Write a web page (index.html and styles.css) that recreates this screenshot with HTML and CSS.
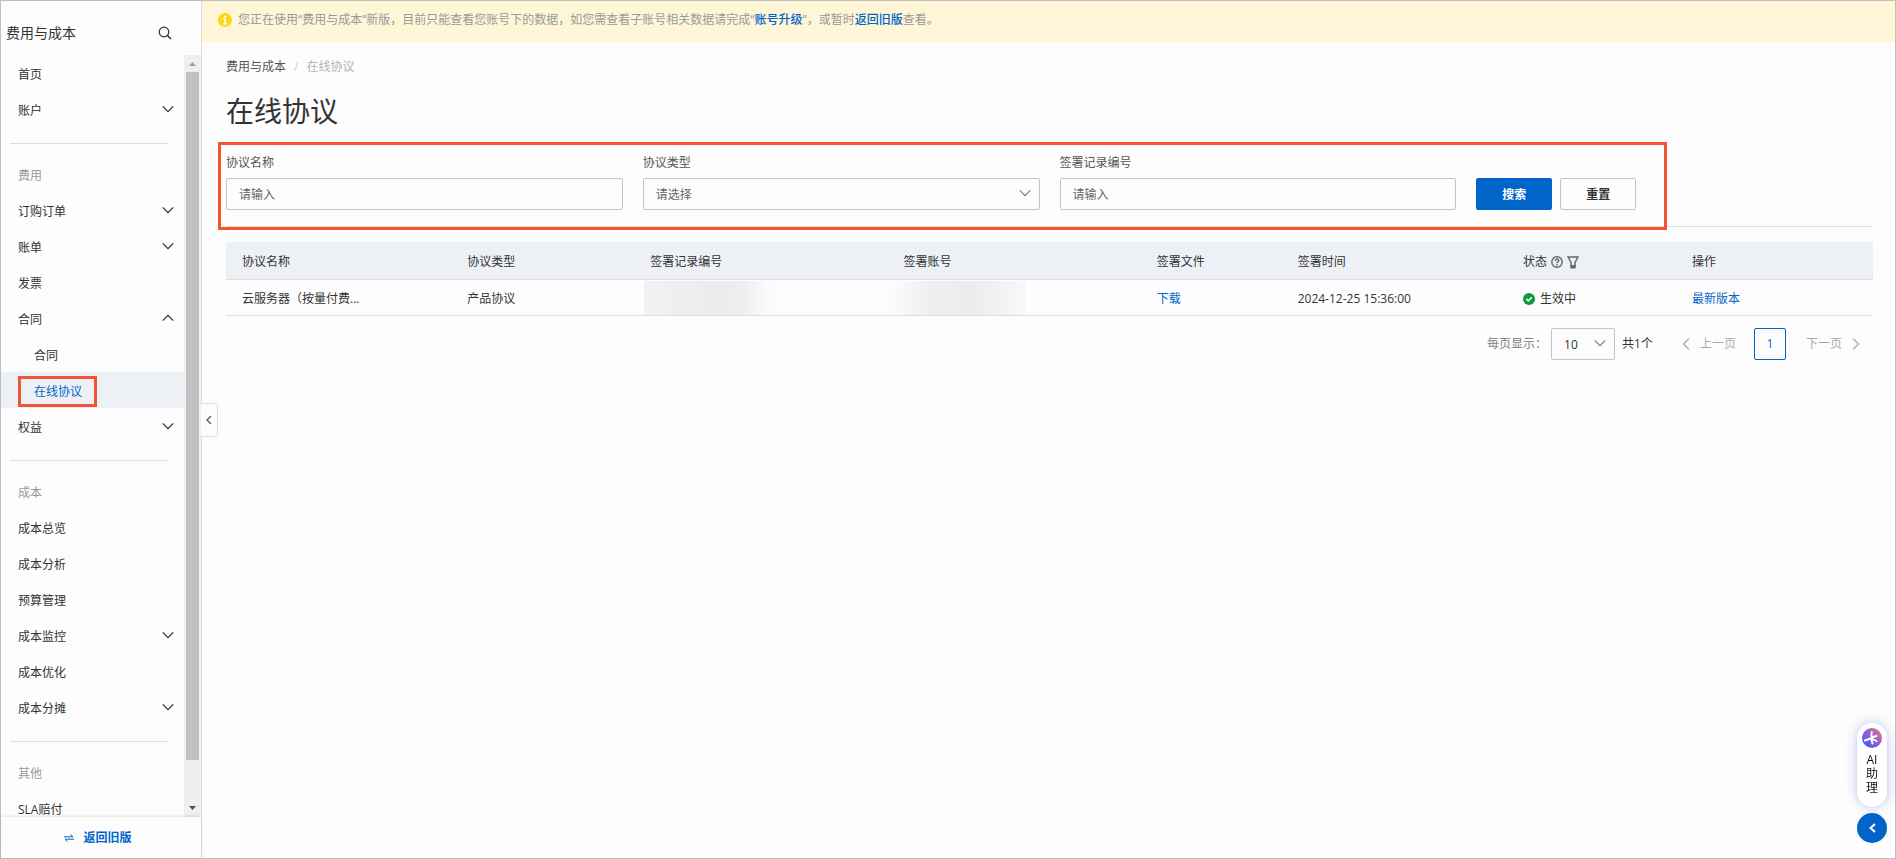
FILE: index.html
```html
<!DOCTYPE html>
<html lang="zh-CN">
<head>
<meta charset="utf-8">
<title>在线协议</title>
<link rel="stylesheet" href="styles.css">
</head>
<body>
<svg class="defs" aria-hidden="true">
  <symbol id="down" viewBox="0 0 12 12"><path d="M.8 3.400 6 8.600l5.200-5.200" fill="none" stroke="currentColor" stroke-width="1.300"/></symbol>
  <symbol id="up" viewBox="0 0 12 12"><path d="M.8 8.600 6 3.400l5.200 5.200" fill="none" stroke="currentColor" stroke-width="1.300"/></symbol>
  <symbol id="left" viewBox="0 0 12 12"><path d="M8.800.8 3.600 6l5.200 5.200" fill="none" stroke="currentColor" stroke-width="1.300"/></symbol>
  <symbol id="right" viewBox="0 0 12 12"><path d="M3.200.8 8.400 6l-5.200 5.200" fill="none" stroke="currentColor" stroke-width="1.300"/></symbol>
</svg>
<div class="app">
  <aside class="sidebar">
    <header class="side-head">
      <span>费用与成本</span>
      <button class="icon-btn" aria-label="搜索菜单"><svg width="14" height="14" viewBox="0 0 14 14"><circle cx="6" cy="6" r="4.800" fill="none" stroke="currentColor" stroke-width="1.200"/><path d="m9.500 9.500 3.500 3.500" stroke="currentColor" stroke-width="1.500"/></svg></button>
    </header>
    <div class="side-body">
      <nav class="menu">
        <a class="item" href="#"><span>首页</span></a>
        <button class="item"><span>账户</span><svg class="chev"><use href="#down"/></svg></button>
        <hr class="rule">
        <h2 class="item group"><span>费用</span></h2>
        <button class="item"><span>订购订单</span><svg class="chev"><use href="#down"/></svg></button>
        <button class="item"><span>账单</span><svg class="chev"><use href="#down"/></svg></button>
        <a class="item" href="#"><span>发票</span></a>
        <button class="item"><span>合同</span><svg class="chev"><use href="#up"/></svg></button>
        <a class="item sub" href="#"><span>合同</span></a>
        <a class="item sub active" href="#"><span>在线协议</span></a>
        <button class="item"><span>权益</span><svg class="chev"><use href="#down"/></svg></button>
        <hr class="rule">
        <h2 class="item group"><span>成本</span></h2>
        <a class="item" href="#"><span>成本总览</span></a>
        <a class="item" href="#"><span>成本分析</span></a>
        <a class="item" href="#"><span>预算管理</span></a>
        <button class="item"><span>成本监控</span><svg class="chev"><use href="#down"/></svg></button>
        <a class="item" href="#"><span>成本优化</span></a>
        <button class="item"><span>成本分摊</span><svg class="chev"><use href="#down"/></svg></button>
        <hr class="rule">
        <h2 class="item group"><span>其他</span></h2>
        <a class="item" href="#"><span>SLA赔付</span></a>
      </nav>
      <div class="scrollbar" aria-hidden="true">
        <svg class="arrow dim" viewBox="0 0 17 17"><path d="M5 11h7L8.500 7z" fill="currentColor"/></svg>
        <div class="track"><div class="thumb"></div></div>
        <svg class="arrow" viewBox="0 0 17 17"><path d="M5 6h7l-3.500 4z" fill="currentColor"/></svg>
      </div>
    </div>
    <footer class="side-foot">
      <a href="#"><svg width="10" height="8" viewBox="0 0 10 8"><path d="M0 2.800h9L6.500.5M10 5.200H1l2.500 2.300" fill="none" stroke="currentColor"/></svg><span>返回旧版</span></a>
    </footer>
    <button class="collapse" aria-label="收起菜单"><svg width="8" height="10" viewBox="0 0 8 10"><path d="M6 1 2 5l4 4" fill="none" stroke="currentColor" stroke-width="1.500"/></svg></button>
  </aside>

  <main class="main">
    <div class="notice">
      <svg width="14" height="14" viewBox="0 0 14 14"><circle cx="7" cy="7" r="7" fill="#ffd51a"/><circle cx="7" cy="3.700" r="1.200" fill="#fff"/><path d="M5.300 6.200H7v4.300M5.200 10.800h3.800" fill="none" stroke="#fff" stroke-width="1.500"/></svg>
      <p>您正在使用“费用与成本”新版，目前只能查看您账号下的数据，如您需查看子账号相关数据请完成“<a href="#">账号升级</a>”，或暂时<a href="#">返回旧版</a>查看。</p>
    </div>
    <div class="content">
      <nav class="crumbs"><a href="#">费用与成本</a><span class="slash">/</span><span class="current">在线协议</span></nav>
      <h1>在线协议</h1>

      <form class="filters">
        <div class="field"><label for="name">协议名称</label><input id="name" type="text" placeholder="请输入"></div>
        <div class="field"><label for="type">协议类型</label>
          <div class="select"><select id="type"><option>请选择</option></select><svg class="chev"><use href="#down"/></svg></div>
        </div>
        <div class="field"><label for="record">签署记录编号</label><input id="record" type="text" placeholder="请输入"></div>
        <div class="actions"><button class="btn primary" type="button">搜索</button><button class="btn" type="reset">重置</button></div>
        <div class="marker"></div>
      </form>

      <table>
        <colgroup><col class="c16"><col class="c13"><col class="c18"><col class="c18"><col class="c10"><col class="c16"><col class="c12"><col class="c14"></colgroup>
        <thead><tr>
          <th>协议名称</th><th>协议类型</th><th>签署记录编号</th><th>签署账号</th><th>签署文件</th><th>签署时间</th>
          <th><div class="inline">状态
            <svg class="help" viewBox="0 0 12 12"><circle cx="6" cy="6" r="5.200" fill="none" stroke="currentColor" stroke-width="1.400"/><path d="M4.300 4.900c0-2.400 3.400-2.300 3.400-.3C7.700 5.800 6 5.700 6 7.300M6 8v1.500" fill="none" stroke="currentColor" stroke-width="1.500"/></svg>
            <svg class="help" viewBox="0 0 12 12"><path d="M1 1h10L8 6.500V11H4V6.500z" fill="none" stroke="currentColor" stroke-width="1.400"/><path d="M3.500 9h5v3.500h-5z" fill="currentColor"/></svg></div></th>
          <th>操作</th>
        </tr></thead>
        <tbody><tr>
          <td>云服务器（按量付费...</td><td>产品协议</td><td class="masked"><div class="mask"></div></td><td class="masked"><div class="mask second"></div></td>
          <td><a href="#">下载</a></td><td>2024-12-25 15:36:00</td>
          <td><div class="inline status"><svg class="ok" viewBox="0 0 12 12"><circle cx="6" cy="6" r="6" fill="#0a9a38"/><path d="m3.300 5.900 2 2 3.500-3.500" fill="none" stroke="#fff" stroke-width="1.500"/></svg>生效中</div></td>
          <td><a href="#">最新版本</a></td>
        </tr></tbody>
      </table>

      <div class="pager">
        <label for="size">每页显示：</label>
        <div class="select size"><select id="size"><option>10</option></select><svg class="chev"><use href="#down"/></svg></div>
        <span class="total">共1个</span>
        <button class="step prev" disabled><svg class="chev"><use href="#left"/></svg>上一页</button>
        <button class="page">1</button>
        <button class="step next" disabled>下一页<svg class="chev"><use href="#right"/></svg></button>
      </div>
    </div>
  </main>

  <div class="float">
    <button class="ai">
      <svg width="20" height="20" viewBox="0 0 20 20"><defs><linearGradient id="g" x1="0" y1="1" x2="1" y2="0"><stop offset="0" stop-color="#2d5bff"/><stop offset=".5" stop-color="#8a62d8"/><stop offset="1" stop-color="#f0786a"/></linearGradient></defs><circle cx="10" cy="10" r="10" fill="url(#g)"/><path d="M9.800 4 9.300 9.500M9.300 9.500 14.500 8M9.500 10.500l5 2.500M9.300 10.500l1.200 5M2.800 12.500l6-2" fill="none" stroke="#fff" stroke-width="1.900" stroke-linecap="round"/></svg>
      <span>AI</span><span>助</span><span>理</span>
    </button>
    <button class="round" aria-label="展开"><svg width="10" height="12" viewBox="0 0 10 12"><path d="M8 2 3.500 6 8 10" fill="none" stroke="currentColor" stroke-width="2"/></svg></button>
  </div>
</div>
</body>
</html>
```
FILE: styles.css
```css
*, *::before, *::after { box-sizing: border-box; }
body {
  margin: 0;
  font: 12px/18px "Open Sans", "Noto Sans CJK SC", sans-serif;
  color: #333;
  background: #fdfdfd;
}
button, input, select { font: inherit; color: inherit; }
button { background: none; border: 0; padding: 0; cursor: pointer; }
a { color: #0064c8; text-decoration: none; }
h1, h2, p { margin: 0; font-weight: 400; }
svg { display: block; flex: none; }
.defs { position: absolute; width: 0; height: 0; }
.chev { width: 12px; height: 12px; }

.app { display: flex; height: 100vh; border: 1px solid #bfbfbf; }

/* Sidebar */
.sidebar {
  position: relative;
  flex: none;
  display: flex;
  flex-direction: column;
  width: 201px;
  border-right: 1px solid #dedede;
}
.side-head {
  flex: none;
  display: flex;
  align-items: center;
  justify-content: space-between;
  height: 54px;
  padding: 9px 29px 0 5px;
  font-size: 14px;
}
.side-body { flex: 1; display: flex; min-height: 0; }
.menu { flex: 1; overflow: hidden; }
.item {
  display: flex;
  align-items: center;
  justify-content: space-between;
  width: 100%;
  height: 36px;
  padding: 0 10px 0 17px;
  font-size: 12px;
  color: #333;
}
.item span { padding-top: 4px; }
.item.group { color: #999; }
.item.sub { padding-left: 33px; }
.item.active { position: relative; color: #0064c8; background: #edf1f6; }
.item.active::after {
  content: "";
  position: absolute;
  left: 17px;
  top: 4px;
  width: 79px;
  height: 31px;
  border: 3px solid #f25533;
}
.rule { height: 1px; margin: 16px 16px 12px 9px; border: 0; background: #dedede; }
.scrollbar { display: flex; flex-direction: column; width: 17px; background: #efefef; }
.arrow { width: 17px; height: 17px; color: #505050; }
.arrow.dim { color: #a0a0a0; }
.track { flex: 1; padding: 0 2px; }
.thumb { height: 94.5%; background: #c1c1c1; }
.side-foot {
  flex: none;
  height: 41px;
  padding-top: 12px;
  box-shadow: 0 -1px 3px rgba(0, 0, 0, .12);
  font-weight: 700;
}
.side-foot a { display: flex; align-items: center; justify-content: center; gap: 9px; padding-right: 6px; }
.collapse {
  position: absolute;
  left: 200px;
  top: 402px;
  display: flex;
  align-items: center;
  justify-content: center;
  width: 17px;
  height: 34px;
  border: 1px solid #dedede;
  border-left: 0;
  border-radius: 0 2px 2px 0;
  background: #fdfdfd;
  color: #666;
}

/* Main */
.main { flex: 1; min-width: 0; }
.notice {
  display: flex;
  align-items: center;
  gap: 6px;
  min-height: 41px;
  padding: 0 16px 4px;
  background: #fff6d8;
  color: #999;
}
.notice a { font-weight: 500; }
.content { padding: 16px 22px 0 24px; }
.crumbs { display: flex; gap: 8px; }
.crumbs a { color: #555; }
.crumbs .slash { color: #ccc; }
.crumbs .current { color: #b3b3b3; }
h1 { padding: 15px 0; font-size: 28px; line-height: 40px; }

.filters {
  position: relative;
  display: grid;
  grid-template-columns: repeat(4, 1fr);
  gap: 20px;
  padding: 8px 0 16px;
  margin-bottom: 15px;
  border-bottom: 1px solid #dedede;
}
.field { display: flex; flex-direction: column; gap: 6px; min-width: 0; }
.field label { color: #555; }
.field input, .select select {
  width: 100%;
  height: 32px;
  padding: 1px 12px 0;
  border: 1px solid #c0c6cc;
  border-radius: 2px;
  background: #fdfdfd;
}
.field input::placeholder { color: #666; opacity: 1; }
.select { position: relative; }
.select select { appearance: none; color: #666; }
.select .chev { position: absolute; right: 9px; top: 9px; color: #808080; pointer-events: none; }
.actions { display: flex; align-items: flex-end; gap: 8px; }
.btn { width: 76px; height: 32px; padding-top: 1px; border: 1px solid #c0c6cc; border-radius: 2px; font-weight: 700; }
.btn.primary { border-color: #0064c8; background: #0064c8; color: #fff; }
.marker {
  position: absolute;
  left: -8px;
  right: 206px;
  top: -4px;
  bottom: -4px;
  border: 3px solid #f25533;
  pointer-events: none;
}

table { width: 100%; table-layout: fixed; border-collapse: separate; border-spacing: 0; }
.c10 { width: 8.55%; }
.c12 { width: 10.26%; }
.c13 { width: 11.11%; }
.c14 { width: 11.96%; }
.c16 { width: 13.68%; }
.c18 { width: 15.38%; }
th, td {
  padding: 2px 16px 0;
  border-bottom: 1px solid #dedede;
  text-align: left;
  font-weight: 400;
  white-space: nowrap;
}
th { height: 38px; background: #edf1f6; }
td { height: 36px; }
td.masked { padding: 0; }
.inline { display: flex; align-items: center; gap: 4px; }
.inline.status { gap: 5px; }
.help { width: 12px; height: 12px; color: #666; overflow: visible; }
.ok { width: 12px; height: 12px; }
.mask { width: 148px; height: 34px; margin-left: 10px; background: linear-gradient(90deg, #f2f2f2, #ececec 45%, #ededed 65%, #fbfbfb 84%, #fdfdfd); }
.mask.second { width: 138px; margin-left: 0; background: linear-gradient(90deg, #fdfdfd, #efefef 30%, #ececec 60%, #f8f8f8); }

.pager { display: flex; align-items: center; justify-content: flex-end; padding: 12px 11px 0 0; }
.pager label { margin-right: 4px; color: #808080; }
.select.size { width: 64px; margin-right: 7px; }
.size select { color: #333; }
.step { display: flex; align-items: center; gap: 8px; color: #aaa; }
.step.prev { margin-left: 27px; }
.page { width: 32px; height: 32px; margin: 0 20px 0 18px; border: 1px solid #0064c8; border-radius: 2px; color: #0064c8; }

/* Floating assistant */
.float { position: fixed; right: 9px; bottom: 16px; display: flex; flex-direction: column; gap: 6px; }
.ai {
  display: flex;
  flex-direction: column;
  align-items: center;
  width: 30px;
  height: 84px;
  padding-top: 5px;
  border-radius: 15px;
  background: #fff;
  box-shadow: 0 0 12px rgba(70, 80, 220, .35);
  line-height: 14px;
  color: #111;
}
.ai svg { margin-bottom: 5px; }
.round {
  display: flex;
  align-items: center;
  justify-content: center;
  width: 30px;
  height: 30px;
  border-radius: 50%;
  background: #0064c8;
  color: #fff;
}
```
